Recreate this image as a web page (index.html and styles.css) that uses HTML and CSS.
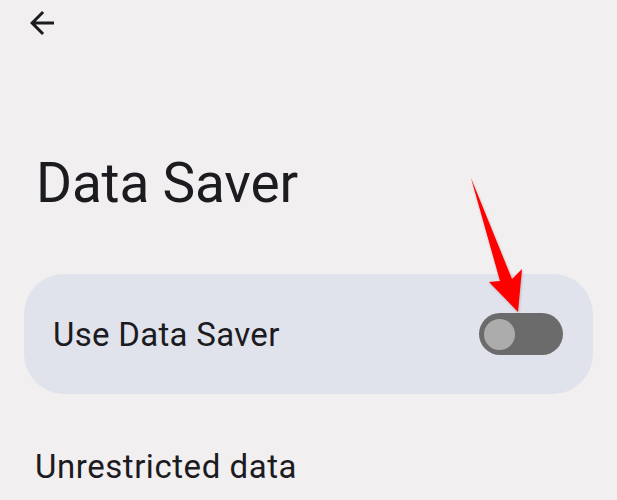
FILE: index.html
```html
<!DOCTYPE html>
<html lang="en">
<head>
<meta charset="utf-8">
<link rel="stylesheet" href="styles.css">
</head>
<body>
<div class="screen">
  <header class="topbar">
    <svg class="back" viewBox="0 0 24 24" width="36" height="36"><path d="M20 11H7.83l5.59-5.59L12 4l-8 8 8 8 1.41-1.41L7.83 13H20v-2z" fill="#1c1b1f"/></svg>
  </header>
  <h1 class="title">Data Saver</h1>
  <div class="card">
    <span class="card-label">Use Data Saver</span>
    <div class="switch"><div class="thumb"></div></div>
  </div>
  <div class="item">Unrestricted data</div>
  <svg class="pointer" width="617" height="500" viewBox="0 0 617 500">
    <defs>
      <filter id="sh" x="-20%" y="-20%" width="140%" height="140%">
        <feDropShadow dx="0.5" dy="1" stdDeviation="1" flood-color="#000" flood-opacity="0.25"/>
      </filter>
    </defs>
    <polygon points="471,178 512,279 522,269 518,312 489,282 500,281" fill="#ff0000" filter="url(#sh)"/>
  </svg>
</div>
</body>
</html>
```
FILE: styles.css
```css
html, body {
  margin: 0;
  padding: 0;
  background: #f2eff1;
}
.screen {
  position: relative;
  width: 617px;
  height: 500px;
  overflow: hidden;
  font-family: Roboto, "Noto Sans", sans-serif;
  color: #1c1b1f;
}
.topbar {
  height: 46px;
  display: flex;
  align-items: flex-start;
  padding-left: 24px;
  padding-top: 5px;
  box-sizing: border-box;
}
.back {
  display: block;
}
.title {
  margin: 110px 0 0 0;
  padding-left: 36px;
  font-size: 55px;
  line-height: 55px;
  font-weight: 400;
  letter-spacing: -0.2px;
}
.card {
  margin: 63px 24px 0 24px;
  height: 120px;
  border-radius: 40px;
  background: #e1e3ec;
  display: flex;
  align-items: center;
  justify-content: space-between;
  padding: 0 30px 0 29px;
}
.card-label {
  font-size: 33px;
  line-height: 33px;
  letter-spacing: 0.3px;
}
.switch {
  width: 84px;
  height: 42px;
  border-radius: 21px;
  background: #6b6b6b;
  display: flex;
  align-items: center;
  padding-left: 5px;
  box-sizing: border-box;
}
.thumb {
  width: 31px;
  height: 31px;
  border-radius: 50%;
  background: #acacac;
}
.item {
  margin-top: 56px;
  padding-left: 35px;
  font-size: 33px;
  line-height: 33px;
  letter-spacing: 0.55px;
}
.pointer {
  position: absolute;
  left: 0;
  top: 0;
  pointer-events: none;
}
```
